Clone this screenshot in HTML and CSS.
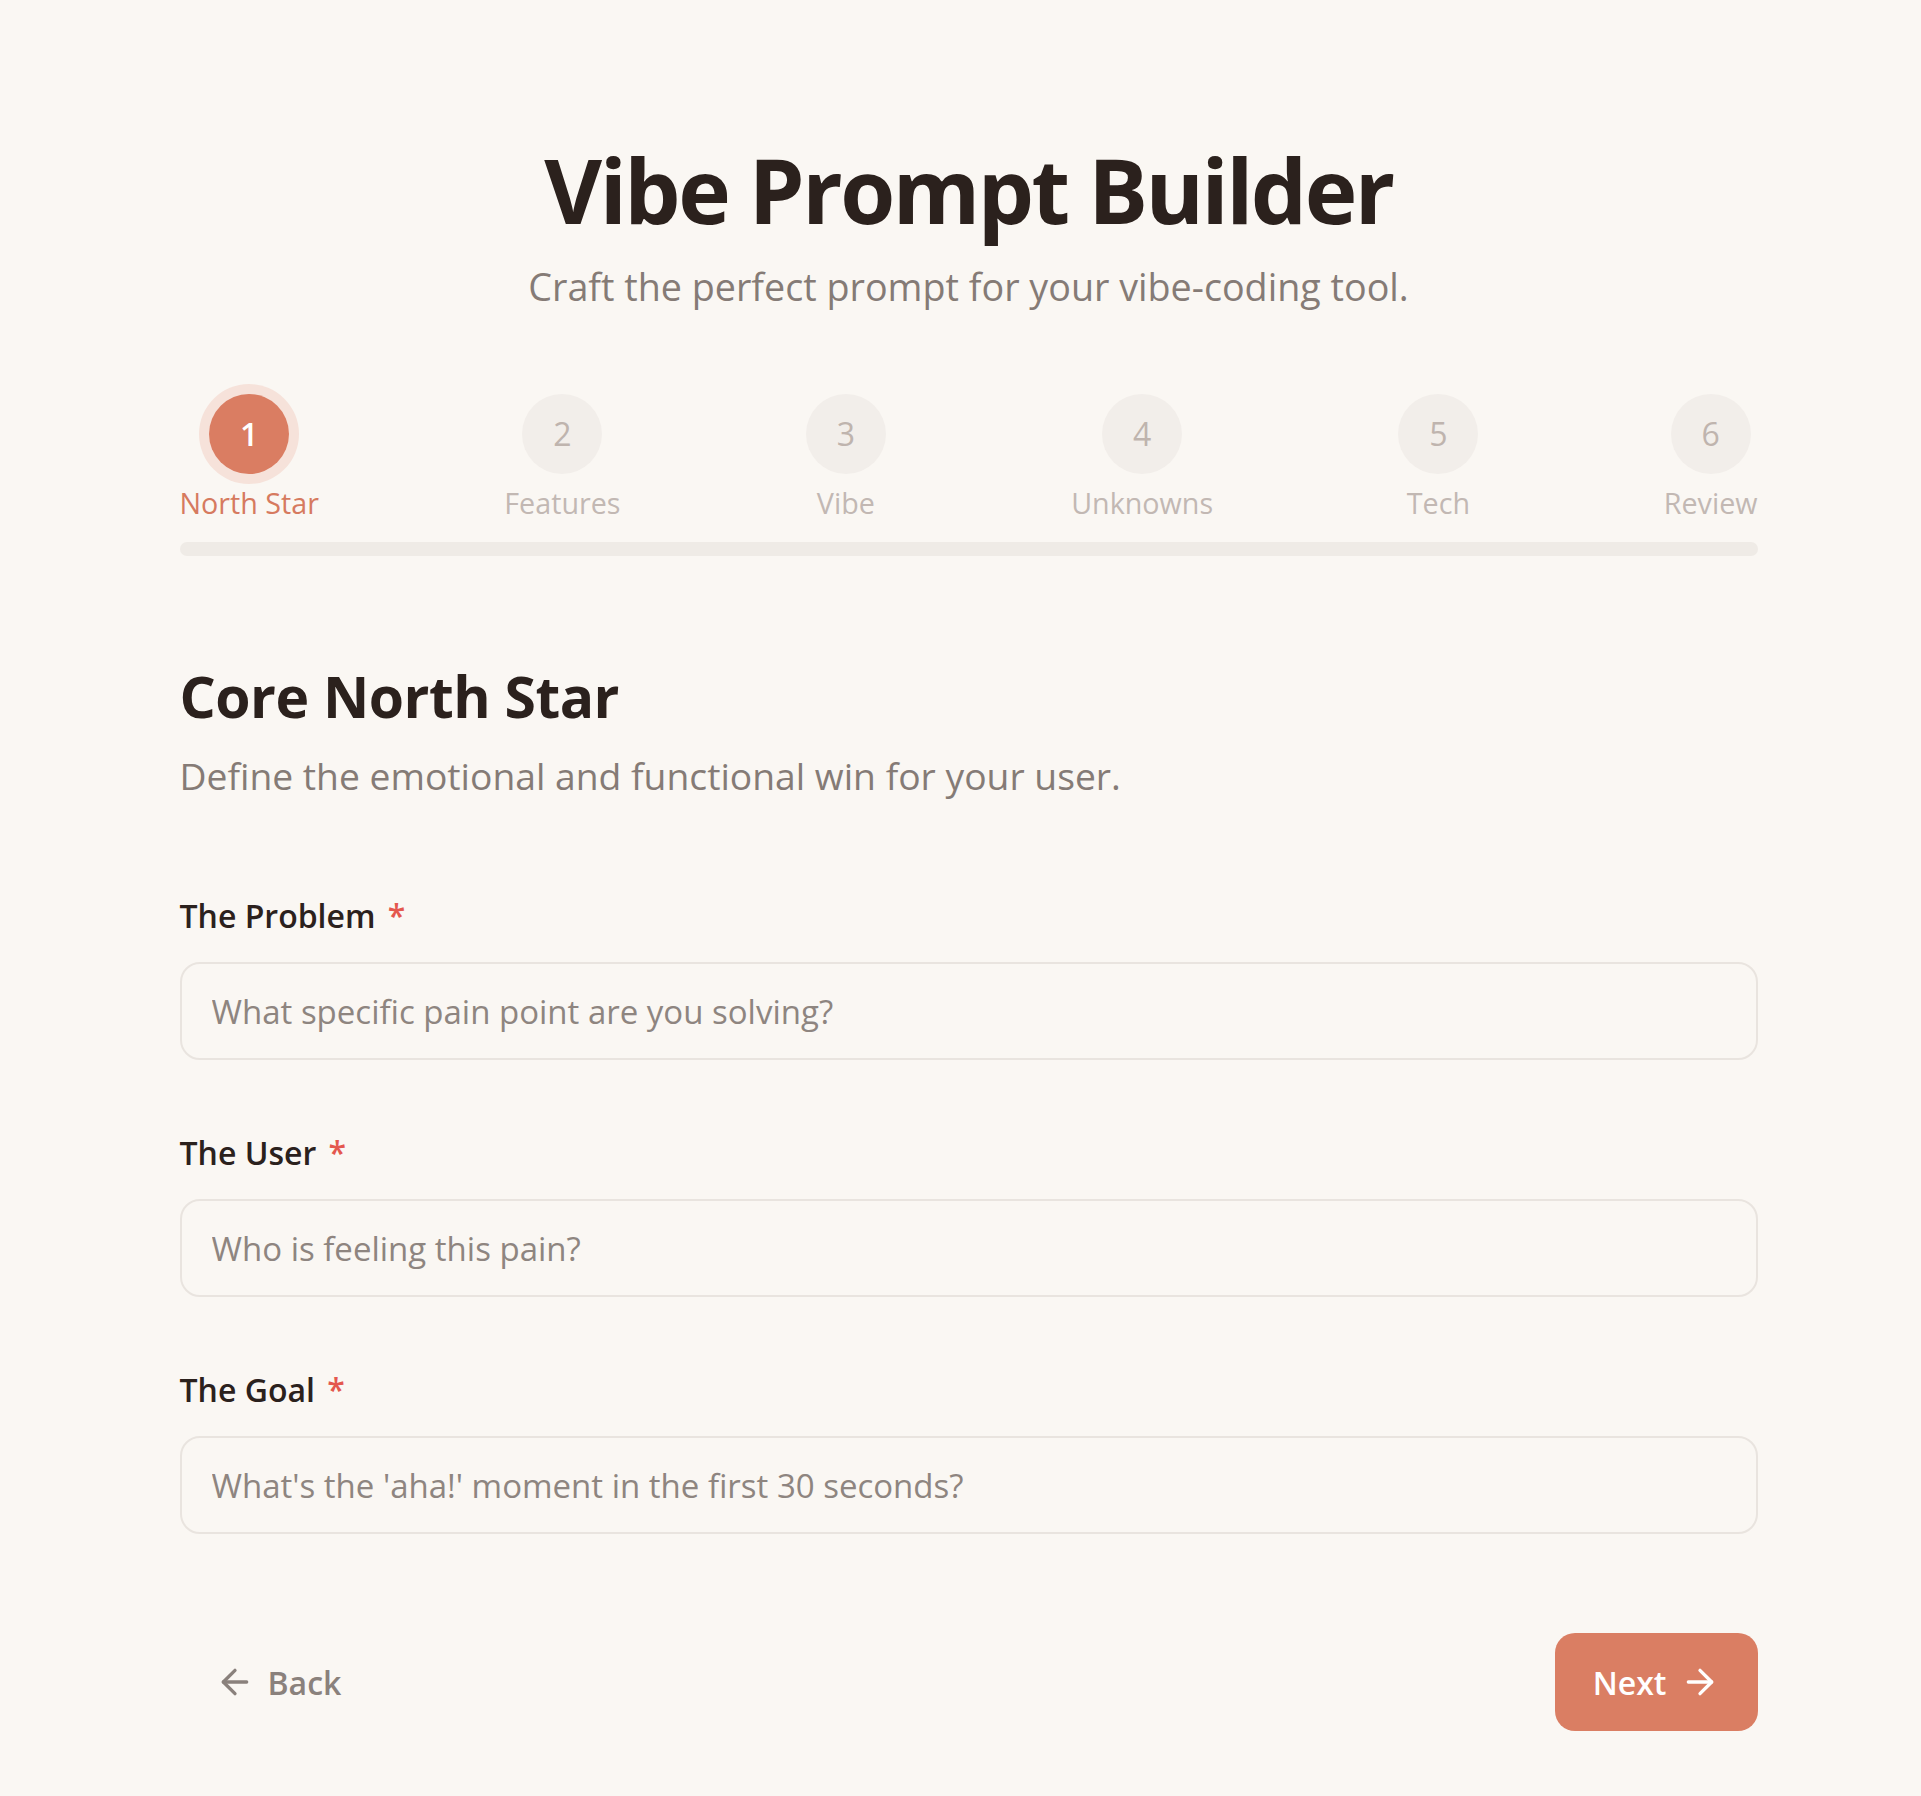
FILE: index.html
```html
<!DOCTYPE html>
<html lang="en">
<head>
<meta charset="utf-8">
<title>Vibe Prompt Builder</title>
<link rel="stylesheet" href="styles.css">
</head>
<body>
<div class="page">
  <header class="hero">
    <h1 class="hero-title">Vibe Prompt Builder</h1>
    <p class="hero-sub">Craft the perfect prompt for your vibe-coding tool.</p>
  </header>

  <nav class="stepper">
    <ol class="steps">
      <li class="step is-active"><span class="step-dot">1</span><span class="step-label">North Star</span></li>
      <li class="step"><span class="step-dot">2</span><span class="step-label">Features</span></li>
      <li class="step"><span class="step-dot">3</span><span class="step-label">Vibe</span></li>
      <li class="step"><span class="step-dot">4</span><span class="step-label">Unknowns</span></li>
      <li class="step"><span class="step-dot">5</span><span class="step-label">Tech</span></li>
      <li class="step"><span class="step-dot">6</span><span class="step-label">Review</span></li>
    </ol>
    <div class="track"><div class="track-fill" style="width:0%"></div></div>
  </nav>

  <section class="panel">
    <h2 class="panel-title">Core North Star</h2>
    <p class="panel-lead">Define the emotional and functional win for your user.</p>

    <div class="field">
      <label class="field-label" for="problem">The Problem <span class="req">*</span></label>
      <input class="field-input" id="problem" type="text" placeholder="What specific pain point are you solving?">
    </div>
    <div class="field">
      <label class="field-label" for="user">The User <span class="req">*</span></label>
      <input class="field-input" id="user" type="text" placeholder="Who is feeling this pain?">
    </div>
    <div class="field">
      <label class="field-label" for="goal">The Goal <span class="req">*</span></label>
      <input class="field-input" id="goal" type="text" placeholder="What's the 'aha!' moment in the first 30 seconds?">
    </div>
  </section>

  <footer class="actions">
    <button class="btn btn-back" type="button">
      <svg class="btn-icon" viewBox="0 0 24 24" fill="none" stroke="currentColor" stroke-width="2" stroke-linecap="round" stroke-linejoin="round"><path d="m12 19-7-7 7-7"/><path d="M19 12H5"/></svg>
      <span>Back</span>
    </button>
    <button class="btn btn-next" type="button">
      <span>Next</span>
      <svg class="btn-icon" viewBox="0 0 24 24" fill="none" stroke="currentColor" stroke-width="2" stroke-linecap="round" stroke-linejoin="round"><path d="M5 12h14"/><path d="m12 5 7 7-7 7"/></svg>
    </button>
  </footer>
</div>
</body>
</html>
```

FILE: styles.css
```css
* { box-sizing: border-box; }

html, body {
  margin: 0;
  background: #faf7f3;
}

body {
  padding-left: 16px;
  font-family: "Open Sans", "Noto Sans", sans-serif;
  color: #2b211d;
}

.page {
  width: 1578px;
  margin: 0 auto;
  padding-top: 140px;
  padding-bottom: 64px;
}

/* Hero */
.hero {
  text-align: center;
}

.hero-title {
  margin: 0;
  font-size: 89px;
  line-height: 100px;
  font-weight: 700;
  letter-spacing: -2.5px;
  color: #2b211d;
}

.hero-sub {
  margin: 23px 0 0;
  font-size: 37.7px;
  line-height: 48px;
  color: #857b76;
}

/* Stepper */
.stepper {
  margin-top: 83px;
}

.steps {
  list-style: none;
  margin: 0;
  padding: 0;
  display: flex;
  justify-content: space-between;
}

.step {
  display: flex;
  flex-direction: column;
  align-items: center;
  gap: 11px;
}

.step-dot {
  width: 80px;
  height: 80px;
  border-radius: 50%;
  background: #f2eeea;
  color: #bfb4ae;
  display: flex;
  align-items: center;
  justify-content: center;
  font-size: 32px;
  line-height: 1;
}

.step-label {
  font-size: 28.7px;
  line-height: 36px;
  color: #c2b8b3;
}

.step.is-active .step-dot {
  background: #da7d62;
  color: #ffffff;
  font-weight: 600;
  box-shadow: 0 0 0 10px #f6e2da;
}

.step.is-active .step-label {
  color: #d67a5f;
  font-weight: 500;
}

.track {
  margin-top: 21px;
  height: 14px;
  border-radius: 7px;
  background: #efebe6;
  overflow: hidden;
}

.track-fill {
  height: 100%;
  background: #da7d62;
  border-radius: 7px;
}

/* Panel */
.panel {
  margin-top: 108px;
}

.panel-title {
  margin: 0;
  font-size: 57px;
  line-height: 64px;
  font-weight: 700;
  letter-spacing: -0.5px;
  color: #2b211d;
}

.panel-lead {
  margin: 24px 0 0;
  font-size: 37.25px;
  line-height: 48px;
  color: #857b76;
}

.field {
  display: flex;
  flex-direction: column;
  margin-top: 73px;
}

.field:first-of-type {
  margin-top: 96px;
}

.field-label {
  font-size: 32px;
  line-height: 40px;
  font-weight: 600;
  color: #2b211d;
}

.req {
  color: #e4574e;
  margin-left: 4px;
}

.field-input {
  margin-top: 26px;
  height: 98px;
  width: 100%;
  padding: 0 30px;
  border: 2px solid #e9e4df;
  border-radius: 20px;
  background: #faf7f3;
  font-family: inherit;
  font-size: 33px;
  color: #2b211d;
  outline: none;
}

.field-input::placeholder {
  color: #8e8580;
  opacity: 1;
}

/* Actions */
.actions {
  margin-top: 99px;
  display: flex;
  justify-content: space-between;
  align-items: center;
}

.btn {
  display: inline-flex;
  align-items: center;
  gap: 13px;
  height: 98px;
  border: none;
  border-radius: 20px;
  font-family: inherit;
  font-size: 32px;
  font-weight: 600;
  cursor: pointer;
}

.btn-icon {
  width: 40px;
  height: 40px;
  flex: none;
}

.btn-back {
  padding: 0 34px 0 35px;
  background: transparent;
  color: #8a817c;
}

.btn-next {
  padding: 0 38px 0 38px;
  background: #da7e63;
  color: #ffffff;
}
```
